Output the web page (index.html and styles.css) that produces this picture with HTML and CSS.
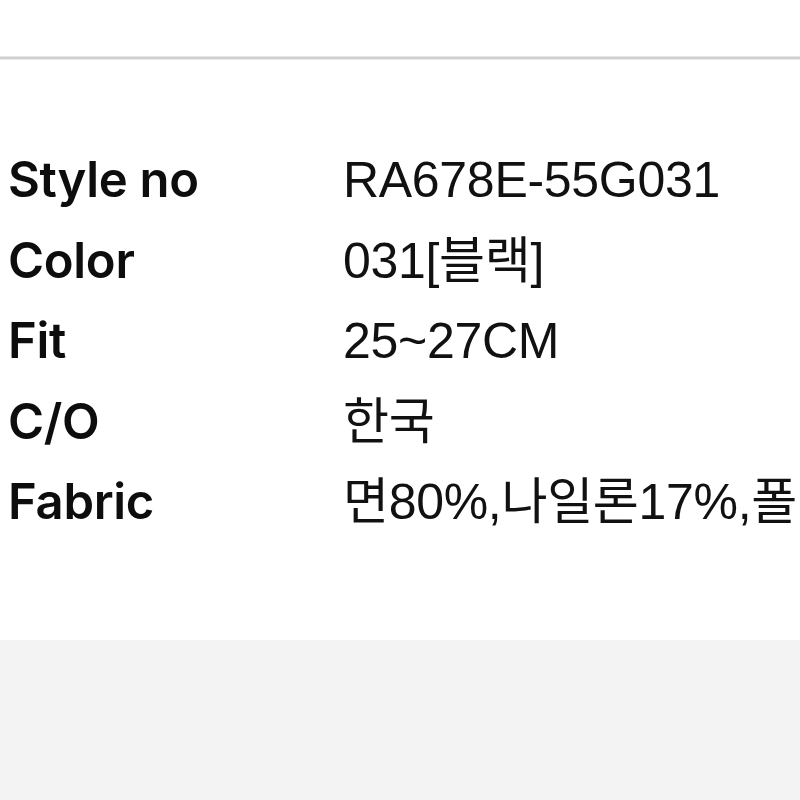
FILE: index.html
```html
<!DOCTYPE html>
<html lang="ko">
<head>
<meta charset="utf-8">
<link rel="stylesheet" href="styles.css">
</head>
<body>
<div class="top"></div>
<div class="divider"></div>
<section class="info">
  <dl class="spec">
    <dt>Style no</dt><dd>RA678E-55G031</dd>
    <dt>Color</dt><dd>031[블랙]</dd>
    <dt>Fit</dt><dd>25~27CM</dd>
    <dt>C/O</dt><dd>한국</dd>
    <dt>Fabric</dt><dd>면80%,나일론17%,폴리우레탄3%</dd>
  </dl>
</section>
<div class="footer"></div>
</body>
</html>
```

FILE: styles.css
```css
html, body {
  margin: 0;
  padding: 0;
  width: 800px;
  height: 800px;
  overflow: hidden;
  background: #ffffff;
}
body {
  font-family: "Liberation Sans", "Noto Sans CJK KR", sans-serif;
  color: #111111;
}
.top {
  height: 56px;
  background: #ffffff;
}
.divider {
  height: 2px;
  background: #cfcfcf;
  border-top: 1px solid #e6e6e6;
  border-bottom: 1px solid #e9e9e9;
}
.info {
  height: 580px;
  padding-top: 80px;
  box-sizing: border-box;
  background: #ffffff;
  overflow: hidden;
}
.spec {
  margin: 0;
  display: grid;
  grid-template-columns: 335px auto;
  padding-left: 8px;
  font-size: 50px;
  line-height: 80.5px;
}
.spec dt, .spec dd {
  margin: 0;
  white-space: nowrap;
}
.spec dt {
  font-family: Inter, "Noto Sans CJK KR", sans-serif;
  font-weight: 600;
  font-size: 49px;
  letter-spacing: -0.3px;
  color: #0d0d0d;
}
.spec dd {
  font-family: "Liberation Sans", "Noto Sans CJK KR", sans-serif;
  letter-spacing: -0.3px;
  color: #111111;
}
.footer {
  height: 160px;
  background: #f3f3f3;
}
```
